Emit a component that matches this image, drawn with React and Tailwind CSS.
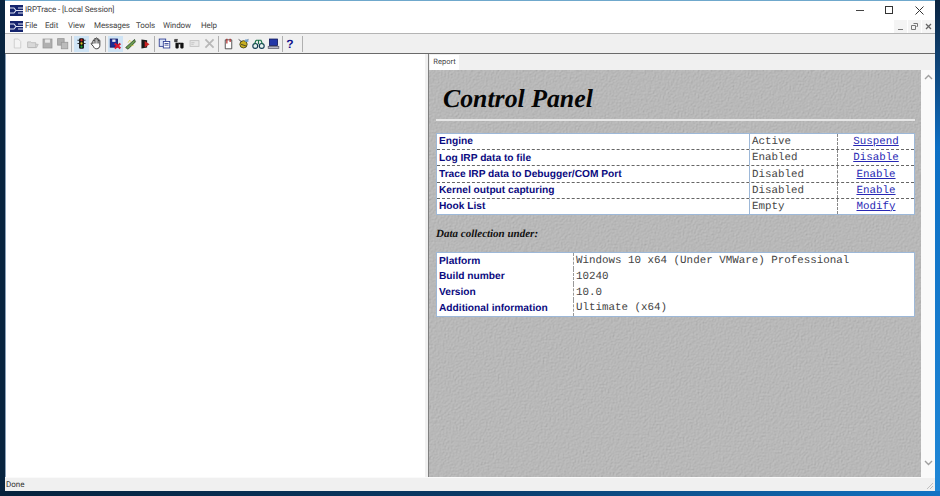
import React from 'react';

const Logo = () => (
  <svg width="13" height="11" viewBox="0 0 13 11" className="shrink-0">
    <rect width="13" height="11" fill="#14246e" />
    <path d="M0 3h4l2 2.500h7M0 8h4l2-2.500M8 3h5M8 8h5" stroke="#dfe4f4" strokeWidth="1.100" fill="none" />
  </svg>
);

// toolbar pictures, 16x16 each
const icons = {
  page: <path d="M4 2.500h5l3 3v8H4z" fill="#f4f4f4" stroke="#c8c8c8" />,
  open: <path d="M2 6h4l1 1h5v6H2zM12 9h3l-2 4H3" fill="#d8d8d8" stroke="#b8b8b8" />,
  save: <><rect x="2.500" y="2.500" width="11" height="11" fill="#b0b0b0" stroke="#989898" /><rect x="5" y="3" width="6" height="4" fill="#e8e8e8" /></>,
  saveall: <><rect x="2" y="2" width="8" height="8" fill="#b0b0b0" stroke="#989898" /><rect x="6.500" y="6.500" width="8" height="8" fill="#bcbcbc" stroke="#989898" /></>,
  light: <><rect x="5" y="1.500" width="6" height="13" rx="1.500" fill="#111" /><circle cx="8" cy="4" r="1.400" fill="#d02020" /><circle cx="8" cy="8" r="1.400" fill="#d8c020" /><circle cx="8" cy="12" r="1.400" fill="#18a030" /><path d="M3 4h2M3 8h2M11 4h2M11 8h2" stroke="#111" /></>,
  hand: <><path d="M3.500 8V5c0-1.200 1.600-1.200 1.800 0V2.800c0-1.200 1.700-1.200 1.800 0V2c0-1.200 1.700-1.200 1.800 0v1c0-1.200 1.700-1.200 1.700 0v1.500c0-1 1.500-1 1.500 0v6c0 2.300-1.700 4-4 4-2 0-3.200-1-4-3L1.500 8.500C1.200 7 3 6.800 3.500 8z" fill="#fff" stroke="#222" strokeWidth="1.100" /><path d="M5.300 5v3M7.100 3v5M8.900 3v5M10.600 4v4" stroke="#222" strokeWidth="0.800" /></>,
  capture: <><rect x="1.500" y="2.500" width="9" height="10" fill="#1c2c96" stroke="#101860" /><rect x="4" y="3" width="4" height="3" fill="#e8e8f4" /><path d="M7 8l7 6M14 8l-7 6" stroke="#d81830" strokeWidth="2.500" /></>,
  filter: <><path d="M2 13L13 3l1 3-9 9z" fill="#6a9a50" stroke="#2c4a28" /><path d="M5 7l2-3 2 2M9 11l3-1" stroke="#d8d040" fill="none" /></>,
  arrow: <><path d="M3 3l7 1v9l-7 1z" fill="#1a1a1a" /><path d="M7 5l6 4-6 4z" fill="#c82020" /></>,
  copy: <><rect x="1.500" y="2.500" width="8" height="9" fill="#dce4f8" stroke="#24348c" /><rect x="6.500" y="5.500" width="8" height="8" fill="#fff" stroke="#24348c" /><path d="M8 8h5M8 10h5" stroke="#24348c" /></>,
  find: <><path d="M2 3h3v3H2zM5 3h1" fill="#444" stroke="#444" /><path d="M6.500 8h3" stroke="#111" strokeWidth="2" /><rect x="3" y="7" width="4" height="7" rx="1" fill="#111" /><rect x="9" y="7" width="4" height="7" rx="1" fill="#111" /></>,
  mail: <><rect x="2.500" y="4.500" width="11" height="7" fill="#e8e8e8" stroke="#bcbcbc" /><path d="M4 7h4M4 9h3" stroke="#c0c0c0" /></>,
  del: <path d="M3 3l10 10M13 3L3 13" stroke="#b8b8b8" strokeWidth="2.200" />,
  book: <><path d="M4 3.500h8v11H4z" fill="#fff" stroke="#333" /><path d="M6 2v6M10 2v4" stroke="#b02020" strokeWidth="1.400" /></>,
  bug: <><circle cx="8" cy="9" r="4.500" fill="#c8b020" stroke="#3a3a10" /><path d="M2 3l4 3M14 3l-4 3M5 9l6 2" stroke="#333" /><path d="M10 3h4v3h-4z" fill="#70a0d0" /></>,
  bike: <><circle cx="4" cy="11" r="3" fill="#e8f4f0" stroke="#103a50" strokeWidth="1.400" /><circle cx="12" cy="11" r="3" fill="#e8f4f0" stroke="#103a50" strokeWidth="1.400" /><path d="M5 4h6l2 5M5 4L3 9M8 4v5" stroke="#187048" strokeWidth="1.400" fill="none" /></>,
  monitor: <><rect x="3" y="2.500" width="10" height="8" fill="#2438a8" stroke="#10185c" /><rect x="1.500" y="11.500" width="13" height="2.500" fill="#b8b8c8" stroke="#606070" /></>,
};

const ToolIcon = ({ name, active }) => (
  <div className={`w-[15px] h-[16px] flex items-center justify-center ${active ? 'bg-[#cfe4f5]' : ''}`}>
    <svg width="13" height="13" viewBox="0 0 16 16">{icons[name]}</svg>
  </div>
);

const Sep = ({ className = 'mx-[1.5px]' }) => <div className={`w-px h-[16px] bg-[#b0b0b0] ${className}`} />;

const statusRows = [
  ['Engine', 'Active', 'Suspend'],
  ['Log IRP data to file', 'Enabled', 'Disable'],
  ['Trace IRP data to Debugger/COM Port', 'Disabled', 'Enable'],
  ['Kernel output capturing', 'Disabled', 'Enable'],
  ['Hook List', 'Empty', 'Modify'],
];

const infoRows = [
  ['Platform', 'Windows 10 x64 (Under VMWare) Professional'],
  ['Build number', '10240'],
  ['Version', '10.0'],
  ['Additional information', 'Ultimate (x64)'],
];

const labelClass = "font-['Liberation_Sans',sans-serif] font-bold text-[10.2px] text-[#0a0a80] pl-[2px] pt-[2px] leading-none";
const valueClass = "font-['Liberation_Mono',monospace] text-[10.85px] text-[#444] pl-[2px] pt-[2px] leading-none";

const MenuItem = ({ children, className }) => <span className={className}>{children}</span>;

export default function App() {
  return (
    <div className="w-[940px] h-[496px] overflow-hidden flex bg-gradient-to-r from-[#06223c] via-[#0a3a66] to-[#1273c4] font-['Roboto',sans-serif] [text-rendering:geometricPrecision]">
      <div className="w-[5px] h-[491px] bg-[#08243f]" />
      <div className="w-[930px] h-[491px] flex flex-col bg-white border-t border-[#6fa8cc]">
        {/* title bar */}
        <div className="h-[18px] flex items-center pl-[5px] gap-[2px] text-[8px] tracking-[-0.1px] text-[#444] relative shrink-0">
          <Logo />
          <span>IRPTrace - [Local Session]</span>
          <div className="ml-auto flex items-center text-[#333]">
            <div className="w-[29px] flex justify-center"><div className="w-[8px] h-px bg-[#444]" /></div>
            <div className="w-[30px] flex justify-center"><div className="w-[8px] h-[8px] border border-[#333]" /></div>
            <div className="w-[31px] flex justify-center">
              <svg width="9" height="9" viewBox="0 0 9 9"><path d="M.5.5l8 8M8.500.5l-8 8" stroke="#333" /></svg>
            </div>
          </div>
        </div>

        {/* menu bar */}
        <div className="h-[15px] flex items-center pl-[5px] text-[8px] tracking-[-0.1px] text-[#444] border-b border-[#b4b4b4] shrink-0">
          <Logo />
          <div className="flex ml-[2px]">
            <MenuItem className="w-[20px]">File</MenuItem>
            <MenuItem className="w-[23px]">Edit</MenuItem>
            <MenuItem className="w-[26px]">View</MenuItem>
            <MenuItem className="w-[42px]">Messages</MenuItem>
            <MenuItem className="w-[27px]">Tools</MenuItem>
            <MenuItem className="w-[38px]">Window</MenuItem>
            <MenuItem>Help</MenuItem>
          </div>
          <div className="ml-auto flex gap-[1px]">
            <div className="w-[13px] h-[13px] bg-[#f4f4f4] flex items-end justify-center pb-[3px]"><div className="w-[5px] h-px bg-[#777]" /></div>
            <div className="w-[13px] h-[13px] bg-[#f4f4f4] flex items-center justify-center">
              <svg width="7" height="7" viewBox="0 0 7 7"><path d="M2.500.5h4v3h-1M.5 2.500h4v4h-4z" fill="none" stroke="#777" /></svg>
            </div>
            <div className="w-[13px] h-[13px] bg-[#f4f4f4] flex items-center justify-center">
              <svg width="7" height="7" viewBox="0 0 7 7"><path d="M1 1l5 5M6 1L1 6" stroke="#666" strokeWidth="1.300" /></svg>
            </div>
          </div>
        </div>

        {/* toolbar */}
        <div className="h-[20px] flex items-center bg-[#f0f0f0] border-b border-[#6a6a6a] pl-[4.500px] shrink-0">
          <ToolIcon name="page" />
          <ToolIcon name="open" />
          <ToolIcon name="save" />
          <ToolIcon name="saveall" />
          <Sep />
          <ToolIcon name="light" active />
          <ToolIcon name="hand" />
          <Sep />
          <ToolIcon name="capture" active />
          <ToolIcon name="filter" />
          <ToolIcon name="arrow" />
          <Sep />
          <ToolIcon name="copy" />
          <ToolIcon name="find" />
          <ToolIcon name="mail" />
          <ToolIcon name="del" />
          <Sep />
          <ToolIcon name="book" />
          <ToolIcon name="bug" />
          <ToolIcon name="bike" />
          <ToolIcon name="monitor" />
          <Sep />
          <div className="w-[11px] text-center font-['Liberation_Sans',sans-serif] font-bold text-[12px] leading-none text-[#10108c]">?</div>
          <Sep className="ml-[6px]" />
        </div>

        {/* panes */}
        <div className="flex-1 flex min-h-0">
          <div className="w-[420px] bg-white border-l border-[#8aa0b8]" />
          <div className="w-[3px] bg-[#f0f0f0]" />
          <div className="flex-1 flex flex-col border-l border-[#808080]">
            <div className="h-[16px] bg-[#f0f0f0] flex items-end pl-[1px] shrink-0">
              <div className="w-[29px] h-[15px] bg-white text-[7.5px] leading-[14px] text-center text-[#444]">Report</div>
            </div>
            <div className="flex-1 flex min-h-0">
              <div className="relative flex-1 bg-[#b6b6b6] overflow-hidden">
                <svg className="absolute inset-0 w-full h-full">
                  <filter id="stone" x="0" y="0" width="100%" height="100%" colorInterpolationFilters="sRGB">
                    <feTurbulence type="fractalNoise" baseFrequency="0.6" numOctaves="2" seed="4" result="n" />
                    <feDiffuseLighting in="n" surfaceScale="0.400" diffuseConstant="1" lightingColor="#c4c4c4">
                      <feDistantLight azimuth="225" elevation="70" />
                    </feDiffuseLighting>
                  </filter>
                  <rect width="100%" height="100%" filter="url(#stone)" />
                </svg>
                <div className="relative pl-[7px] pr-[6px] pt-[16px]">
                  <h1 className="font-['Liberation_Serif',serif] font-bold italic text-[25.8px] leading-[26px] text-[#050505] pl-[7px]">Control Panel</h1>
                  <div className="h-[2px] bg-[#e6e6e6] mt-[7px] mb-[12px]" />

                  <div className="bg-white border border-[#9db8d8]">
                    {statusRows.map(([label, value, action], i) => (
                      <div key={label} className={`flex items-center ${i < 4 ? 'h-[16.2px] border-b border-dashed border-[#666]' : 'h-[15px]'}`}>
                        <div className={`w-[312px] ${labelClass}`}>{label}</div>
                        <div className={`w-[88px] h-full flex items-center border-l border-[#9db8d8] ${valueClass}`}>{value}</div>
                        <div className="flex-1 h-full flex items-center justify-center border-l border-dashed border-[#888] pt-[2px] font-['Liberation_Mono',monospace] text-[10.85px] leading-none text-[#2828b4] underline">{action}</div>
                      </div>
                    ))}
                  </div>

                  <p className="font-['Liberation_Serif',serif] font-bold italic text-[11px] leading-none text-[#111] mt-[14px] mb-[12px]">Data collection under:</p>

                  <div className="bg-white border border-[#9db8d8]">
                    {infoRows.map(([label, value]) => (
                      <div key={label} className="h-[15.75px] flex items-center">
                        <div className={`w-[136px] ${labelClass}`}>{label}</div>
                        <div className={`flex-1 h-full flex items-center border-l border-dashed border-[#999] ${valueClass}`}>{value}</div>
                      </div>
                    ))}
                  </div>
                </div>
              </div>
              <div className="w-[14px] bg-[#fafafa] flex flex-col items-center justify-between pt-[4px] pb-[11px] shrink-0">
                <svg width="9" height="6" viewBox="0 0 9 6"><path d="M1 5l3.500-3.500L8 5" fill="none" stroke="#a0a0a0" strokeWidth="1.400" /></svg>
                <svg width="9" height="6" viewBox="0 0 9 6"><path d="M1 1l3.500 3.500L8 1" fill="none" stroke="#a0a0a0" strokeWidth="1.400" /></svg>
              </div>
            </div>
          </div>
        </div>

        {/* status bar */}
        <div className="h-[14px] bg-[#f0f0f0] border-t border-[#fafafa] flex items-center pl-[1px] text-[8px] text-[#333] relative shrink-0">
          <span>Done</span>
          <svg className="absolute right-[1px] bottom-[1px]" width="8" height="8" viewBox="0 0 8 8"><path d="M7 1L1 7M7 4L4 7" stroke="#c0c0c0" /></svg>
        </div>
      </div>
      <div className="w-[5px] h-[491px] bg-gradient-to-b from-[#0a2440] via-[#0c6fc4] via-30% to-[#1e86d6]" />
    </div>
  );
}
